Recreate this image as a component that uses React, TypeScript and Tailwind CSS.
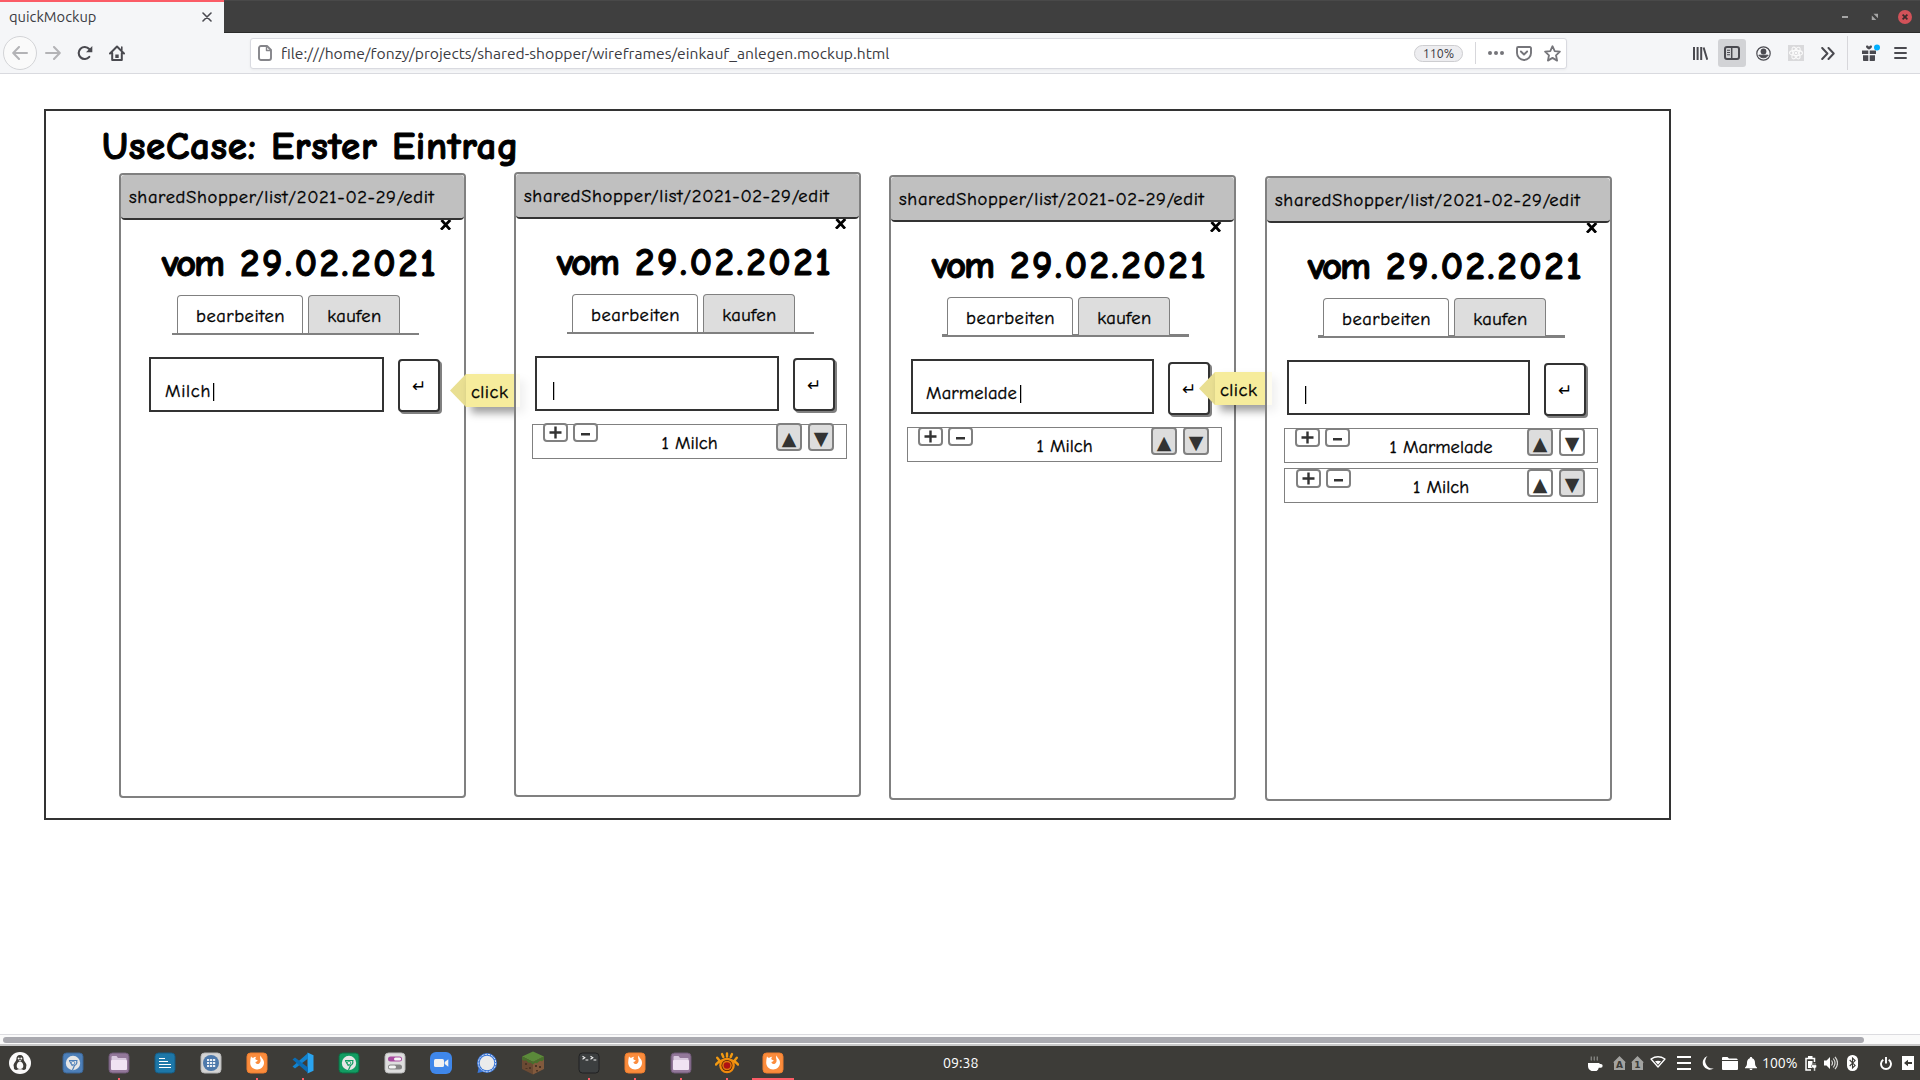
import type { ReactNode } from "react";

/* ---------- browser chrome ---------- */

function TabStrip() {
  return (
    <div className="flex h-[33px] bg-[#3f3f3f] border-b border-[#2b2b2b]">
      <div className="flex h-[33px] w-[224px] shrink-0 items-center justify-between border-t-2 border-[#fb5c66] bg-[#f5f6f8] pl-[9px] pr-[12px] text-[#3b3b42]">
        <span className="pb-[1px] text-[14.7px] leading-5">quickMockup</span>
        <svg className="mb-[1px]" width="10" height="10" viewBox="0 0 10 10" stroke="#4a4a50" strokeWidth="1.6" strokeLinecap="round">
          <path d="M1 1l8 8M9 1L1 9" />
        </svg>
      </div>
      <div className="flex flex-1 items-center justify-end border-t border-[#494949] pr-2">
        <span className="mr-[23px] h-[2px] w-[6px] bg-[#a5a5a5]" />
        <svg className="mr-[19px]" width="8" height="8" viewBox="0 0 8 8" fill="#a5a5a5">
          <path d="M2.500 0.800H7v4.500zM0.800 2.500L5.300 7H0.800z" />
        </svg>
        <svg width="14" height="14" viewBox="0 0 14 14">
          <circle cx="7" cy="7" r="7" fill="#d25259" />
          <path d="M4.6 4.6l4.8 4.8M9.4 4.6L4.6 9.4" stroke="#3a2a2b" strokeWidth="1.7" />
        </svg>
      </div>
    </div>
  );
}

function Toolbar() {
  return (
    <div className="flex h-[41px] items-center border-b border-[#d9dadf] bg-[#f5f6f8] text-[#4a4a50]">
      <div className="ml-[3px] flex size-[34px] items-center justify-center rounded-full border border-[#d3d4d7] bg-[#fafafa]">
        <svg width="16" height="14" viewBox="0 0 16 14" fill="none" stroke="#b3b3b6" strokeWidth="2" strokeLinecap="round" strokeLinejoin="round">
          <path d="M15 7H1.500M7 1L1.200 7 7 13" />
        </svg>
      </div>
      <svg className="ml-[8px]" width="16" height="14" viewBox="0 0 16 14" fill="none" stroke="#b3b3b6" strokeWidth="2" strokeLinecap="round" strokeLinejoin="round">
        <path d="M1 7h13.500M9 1l5.800 6L9 13" />
      </svg>
      <svg className="ml-[16px]" width="16" height="16" viewBox="0 0 16 16" fill="none" stroke="#4a4a50" strokeWidth="2.100">
        <path d="M12.300 11.800A6 6 0 1 1 12.200 4" strokeLinecap="round" />
        <path d="M15.300 1v6.300H9z" fill="#4a4a50" stroke="none" />
      </svg>
      <svg className="ml-[16px]" width="16" height="16" viewBox="0 0 16 16" fill="none" stroke="#4a4a50" strokeWidth="2" strokeLinejoin="round" strokeLinecap="round">
        <path d="M1 8.500L8 1.500l7 7M3.200 8v7h9.600V8" />
        <path d="M8 9.500V13" strokeWidth="3.400" strokeLinecap="butt" />
        <path d="M12.800 2v3" strokeWidth="1.600" />
      </svg>

      <div className="ml-[125px] flex h-[31px] w-[1317px] items-center rounded-[3px] border border-[#d9dae0] bg-white pl-[7px] shadow-[0_1px_3px_rgba(0,0,0,0.05)]">
        <svg width="14" height="16" viewBox="0 0 14 16" fill="none" stroke="#85858a" strokeWidth="1.900" strokeLinejoin="round">
          <path d="M3 1h6l4 4v8a2 2 0 0 1-2 2H3a2 2 0 0 1-2-2V3a2 2 0 0 1 2-2z" />
          <path d="M8.500 1v4.500H13" strokeWidth="1.400" />
        </svg>
        <span className="ml-[9px] w-[620px] whitespace-nowrap pb-[1px] text-[15.650px] leading-5 text-[#3b3b42]">
          file:///home/fonzy/projects/shared-shopper/wireframes/einkauf_anlegen.mockup.html
        </span>
        <div className="ml-auto flex h-[17px] w-[49px] items-center justify-center rounded-full border border-[#cdcdd0] bg-[#ededf0] text-[12.400px] leading-none text-[#3b3b42]">
          110%
        </div>
        <span className="ml-3 h-[22px] w-px bg-[#d7d7db]" />
        <svg className="ml-3" width="16" height="4" viewBox="0 0 16 4" fill="#75757a">
          <circle cx="2" cy="2" r="2" /><circle cx="8" cy="2" r="2" /><circle cx="14" cy="2" r="2" />
        </svg>
        <svg className="ml-[12px]" width="16" height="15" viewBox="0 0 16 15" fill="none" stroke="#75757a" strokeWidth="1.900" strokeLinecap="round" strokeLinejoin="round">
          <path d="M2.200 1h11.600A1.200 1.200 0 0 1 15 2.200V7A7 7 0 0 1 1 7V2.200A1.200 1.200 0 0 1 2.200 1z" />
          <path d="M4.900 5.500L8 8.500l3.100-3" />
        </svg>
        <svg className="ml-[12px] mr-[5px]" width="17" height="17" viewBox="0 0 17 17" fill="none" stroke="#75757a" strokeWidth="1.800" strokeLinejoin="round">
          <path d="M8.500 1.200l2.200 4.900 5.200.6-3.900 3.600 1.100 5.300-4.600-2.700-4.600 2.700L5 10.300 1.100 6.700l5.200-.6z" />
        </svg>
      </div>

      <svg className="ml-[126px]" width="15" height="15" viewBox="0 0 15 15" stroke="#4a4a50" strokeWidth="2">
        <path d="M1 1v13M4.600 1v13M8.200 1v13M10.600 1.500l3.700 12.300" />
      </svg>
      <div className="ml-[10px] flex h-[28px] w-[28px] items-center justify-center rounded-[3px] bg-[#d2d3d6]">
        <svg width="16" height="14" viewBox="0 0 16 14" fill="none" stroke="#4a4a50" strokeWidth="2">
          <rect x="1" y="1" width="14" height="12" rx="2" />
          <path d="M7.700 1v12" strokeWidth="1.500" />
          <path d="M3 4.200h3M3 6.500h3M3 8.800h3" strokeWidth="1.100" />
        </svg>
      </div>
      <svg className="ml-[10px]" width="15" height="15" viewBox="0 0 15 15" fill="none" stroke="#4a4a50">
        <circle cx="7.500" cy="7.500" r="6.700" strokeWidth="1.200" />
        <circle cx="7.500" cy="5.500" r="2.900" fill="#4a4a50" stroke="none" />
        <path d="M2.800 9.200h9.400a5.600 5.600 0 0 1-9.400 0z" fill="#4a4a50" strokeWidth="1" strokeLinejoin="round" />
      </svg>
      <svg className="ml-[17px]" width="16" height="16" viewBox="0 0 16 16">
        <rect width="16" height="16" fill="#d9d9db" />
        <g fill="none" stroke="#fafafa" strokeWidth="1.100">
          <ellipse cx="8" cy="8" rx="6.500" ry="2.600" />
          <ellipse cx="8" cy="8" rx="6.500" ry="2.600" transform="rotate(60 8 8)" />
          <ellipse cx="8" cy="8" rx="6.500" ry="2.600" transform="rotate(120 8 8)" />
        </g>
        <circle cx="8" cy="8" r="1.300" fill="#fafafa" />
      </svg>
      <svg className="ml-[17px]" width="14" height="13" viewBox="0 0 14 13" fill="none" stroke="#4a4a50" strokeWidth="2" strokeLinecap="round" strokeLinejoin="round">
        <path d="M1.200 1l5.200 5.500L1.200 12M7.500 1l5.200 5.500L7.500 12" />
      </svg>
      <span className="ml-[12px] h-[34px] w-px bg-[#d7d7db]" />
      <svg className="ml-[13px]" width="20" height="18" viewBox="0 0 20 18">
        <path d="M1 6.500h6.300V10H1zM8.700 6.500H15V10H8.700zM2 11.300h5.300V17H2.800A.8.800 0 0 1 2 16.200zM8.700 11.300H14v4.900a.8.800 0 0 1-.8.800H8.700z" fill="#4a4a50" />
        <path d="M5 2.600c0-1.300 2-1.600 3 .2 1-1.800 3-1.500 3-.2 0 1.500-1.500 2.400-3 2.900-1.500-.5-3-1.400-3-2.900z" fill="#4a4a50" />
        <circle cx="16" cy="3.600" r="3" fill="#00b0ff" />
      </svg>
      <svg className="ml-[13px]" width="13" height="12" viewBox="0 0 13 12" stroke="#4a4a50" strokeWidth="1.900" strokeLinecap="round">
        <path d="M1 1h11M1 6h11M1 11h11" />
      </svg>
    </div>
  );
}

/* ---------- wireframe ---------- */

const BODY = "text-[18.5px] [-webkit-text-stroke:0.35px_black]";

type Item = { label: string; up: boolean; down: boolean; shift: string };

function MoveButton({ glyph, grey }: { glyph: string; grey: boolean }) {
  return (
    <span
      className={`flex h-[28px] w-[26px] items-end justify-center rounded-[4px] border-2 border-[#808080] font-['DejaVu_Sans'] text-[19px] leading-[21px] text-[#333] ${grey ? "bg-[#ddd]" : "bg-white"}`}
    >
      {glyph}
    </span>
  );
}

function CountButton({ children }: { children: ReactNode }) {
  return (
    <span className="flex h-[19px] w-[25px] items-center justify-center rounded-[4px] border-2 border-[#808080] bg-white">
      {children}
    </span>
  );
}

function ItemRow({ item }: { item: Item }) {
  return (
    <div className="mb-[5px] flex h-[35px] border border-[#808080]">
      <div className={`flex gap-[5px] ${item.shift}`}>
        <CountButton>
          <svg width="13" height="13" viewBox="0 0 13 13" stroke="#333" strokeWidth="2.400"><path d="M0.500 6.500h12M6.500 0.500v12" /></svg>
        </CountButton>
        <CountButton>
          <svg className="mt-[3px]" width="9" height="3" viewBox="0 0 9 3"><path d="M0 0h9v2.500H0z" fill="#333" /></svg>
        </CountButton>
      </div>
      <div className={`flex-1 pl-[15px] pt-[6px] text-center leading-6 ${BODY}`}>{item.label}</div>
      <div className={`mr-[12px] flex gap-[6px] ${item.shift}`}>
        <MoveButton glyph="▲" grey={item.up} />
        <MoveButton glyph="▼" grey={item.down} />
      </div>
    </div>
  );
}

type PhoneProps = {
  place: string;
  rule: string;
  field: string;
  value: ReactNode;
  enter: string;
  rows: string;
  items: Item[];
  note?: string;
};

function Phone({ place, rule, field, value, enter, rows, items, note }: PhoneProps) {
  return (
    <section className={`relative h-[625px] w-[347px] shrink-0 rounded-[4px] border-2 border-[#808080] bg-white/85 ${place}`}>
      <header className={`h-[45px] rounded-[4px] border-b-2 border-[#333] bg-[#c0c0c0] pl-[8px] pt-[10px] leading-6 tracking-[0.640px] ${BODY}`}>
        sharedShopper/list/2021-02-29/edit
      </header>
      <div className="flex h-[17px] justify-end pr-[11px]">
        <svg width="14" height="10" viewBox="0 0 14 10" stroke="#000" strokeWidth="2.800"><path d="M2.500 0L11 9.600M11.300 0L2 9.600" /></svg>
      </div>
      <h2 className="h-[58px] whitespace-nowrap pl-[41px] pt-[3px] text-[39px] font-bold leading-[48px] [-webkit-text-stroke:1px_black]">
        <span className="tracking-[-2px]">vom</span>{" "}
        <span className="ml-[3px] tracking-[2.600px]">29.02.2021</span>
      </h2>
      <div className={`ml-[51px] flex h-[40px] w-[247px] gap-[5px] border-[#808080] pl-[5px] ${rule}`}>
        <span className={`relative z-10 h-[38px] w-[126px] rounded-t-[4px] border border-b-0 border-[#808080] bg-white pl-[1px] pt-[8px] text-center leading-6 tracking-[0.520px] ${BODY}`}>bearbeiten</span>
        <span className={`relative z-10 h-[38px] w-[92px] rounded-t-[4px] border border-b-0 border-[#808080] bg-[#ddd] pl-[1px] pt-[8px] text-center leading-6 tracking-[0.400px] ${BODY}`}>kaufen</span>
      </div>
      <div className="flex h-[78px]">
        <div className={`h-[55px] border-2 border-[#333] bg-white pl-[14px] pt-[20px] leading-6 ${BODY} ${field}`}>{value}</div>
        <div className={`ml-auto mr-[24px] flex h-[53px] w-[42px] items-center justify-center rounded-[4px] border-2 border-[#333] bg-white shadow-[2px_2px_0_#808080] ${enter}`}>
          <span className="font-['DejaVu_Sans'] text-[17px] leading-4">↵</span>
        </div>
      </div>
      <div className={rows}>
        {items.map((item) => <ItemRow key={item.label} item={item} />)}
      </div>
      {note && (
        <div className={`absolute flex h-[33px] ${note}`}>
          <svg className="shrink-0" width="16" height="33" viewBox="0 0 16 33"><path d="M0 16.500L16 0v33z" fill="#e9df92" /></svg>
          <div className={`flex-1 bg-[#f6ec9c] pl-[5px] pt-[6px] leading-6 tracking-[0.450px] shadow-[5px_6px_8px_rgba(0,0,0,0.38)] ${BODY}`}>click</div>
        </div>
      )}
    </section>
  );
}

const caret = <span className="inline-block h-[18px] w-px bg-black align-[-4px] shadow-[0.5px_0_0_rgba(0,0,0,0.5)]" />;

function Mockup() {
  return (
    <div className="ml-[44px] h-[711px] w-[1627px] border-2 border-[#333] font-['Comic_Neue','Comic_Sans_MS','Open_Sans',sans-serif] text-black">
      <h1 className="h-[61px] pl-[56px] pt-[12px] text-[39px] font-bold leading-[48px] tracking-[0.700px] [-webkit-text-stroke:1px_black]">UseCase: Erster Eintrag</h1>
      <div className="flex items-start">
        <Phone
          place="ml-[73px] mt-[1px]" rule="border-b-2"
          field="ml-[28px] mt-[22px] w-[235px]" enter="mt-[24px]" rows=""
          value={<span className="tracking-[0.700px]">Milch<span className="ml-[2px]">{caret}</span></span>}
          items={[]} note="left-[329px] top-[199px] w-[70px]"
        />
        <Phone
          place="ml-[48px]" rule="border-b-2"
          field="ml-[19px] mt-[22px] w-[244px]" enter="mt-[24px]" rows="ml-[16px] mt-[12px] w-[315px]"
          value={<span className="pl-[2px]">{caret}</span>}
          items={[{ label: "1 Milch", up: true, down: true, shift: "ml-[10px] mt-[-2px]" }]}
        />
        <Phone
          place="ml-[28px] mt-[3px]" rule="border-b-[3px]"
          field="ml-[20px] mt-[22px] w-[243px]" enter="mt-[25px]" rows="ml-[16px] mt-[12px] w-[315px]"
          value={<span className="ml-[-1px] tracking-[0.150px]">Marmelade<span className="ml-[3px]">{caret}</span></span>}
          items={[{ label: "1 Milch", up: true, down: true, shift: "ml-[10px] mt-[-1px]" }]}
          note="left-[308px] top-[195px] w-[73px]"
        />
        <Phone
          place="ml-[29px] mt-[4px]" rule="border-b-[3px]"
          field="ml-[20px] mt-[22px] w-[243px]" enter="mt-[25px]" rows="ml-[17px] mt-[12px] w-[314px]"
          value={<span className="pl-[2px]">{caret}</span>}
          items={[
            { label: "1 Marmelade", up: true, down: false, shift: "ml-[10px] mt-[-1px]" },
            { label: "1 Milch", up: false, down: true, shift: "ml-[11px] mt-0" },
          ]}
        />
      </div>
    </div>
  );
}

/* ---------- desktop panel ---------- */

function Tile({ fill, edge, children }: { fill: string; edge: string; children: ReactNode }) {
  return (
    <svg width="22" height="22" viewBox="0 0 22 22">
      <rect x="1" y="1" width="20" height="20" rx="3.500" fill={fill} stroke={edge} strokeWidth="1" />
      {children}
    </svg>
  );
}

const Chromium = ({ fill, edge }: { fill: string; edge: string }) => (
  <Tile fill={fill} edge={edge}>
    <circle cx="11" cy="11" r="7.200" fill="#e6e6e6" />
    <path d="M7 8.500h8.500M12.500 13.500L10.500 18M7.300 8.500l3.200 5.500M14.500 8.500c1 2 0 5-3 5.200" fill="none" stroke={fill} strokeWidth="1.200" />
    <circle cx="11" cy="11" r="1.800" fill="#e6e6e6" stroke={fill} strokeWidth="0.800" />
  </Tile>
);

const Files = () => (
  <Tile fill="#93789a" edge="#6e5876">
    <path d="M3.500 5a1 1 0 0 1 1-1h4l1.500 2h7.500a1 1 0 0 1 1 1v3h-15z" fill="#d9c8de" />
    <rect x="3" y="8" width="16" height="10" rx="1" fill="#f0e3f3" />
  </Tile>
);

const Firefox = () => (
  <Tile fill="#fb8c3c" edge="#ee7d2e">
    <path d="M5 4.200c.6 1.200 1.400 1.700 2.400 1.600.8-.7 1.700-1 2.900-1-1 .9-1.200 1.800-.7 2.600.6.500 1.300.7 2.100.8-.3 1.100-1.300 1.500-2.300 1.900.2 1.900 2.300 2.500 3.800 1.300 1.600-1.300 1.700-3.200 1-5-.3-1.100 0-2.100.6-2.800.2 1.300.9 2.100 1.700 3.100 1.100 1.300 1.600 2.800 1.500 4.500-.3 3.600-3.200 6.200-6.900 6.200-4 0-6.900-3-6.900-6.700 0-2.300.3-4.200.8-6.500z" fill="#fff" />
  </Tile>
);

const Launchers: { icon: ReactNode; mark: "none" | "dot" | "bar"; gap?: boolean }[] = [
  { icon: <Chromium fill="#4d7fb8" edge="#3b6594" />, mark: "none" },
  { icon: <Files />, mark: "dot" },
  {
    icon: <Tile fill="#1d77a8" edge="#165c84"><path d="M5 6.500h6M5 9.500h9M5 12.500h12M5 15.500h12" stroke="#fff" strokeWidth="1.200" /></Tile>,
    mark: "none",
  },
  {
    icon: (
      <Tile fill="#d4d4d4" edge="#b5b5b5">
        <circle cx="11" cy="11" r="8" fill="#4d79ab" />
        <path d="M7 8h2.200M10 8h2.200M13 8h2.200M7 11h2.200M10 11h2.200M13 11h2.200M7 14h2.200M10 14h2.200M13 14h2.200" stroke="#e8eef5" strokeWidth="2.200" />
      </Tile>
    ),
    mark: "none",
  },
  { icon: <Firefox />, mark: "dot" },
  {
    icon: (
      <svg width="22" height="22" viewBox="0 0 22 22">
        <path d="M15.500 0.500l6 2.800v15.400l-6 2.800z" fill="#2aa4f0" />
        <path d="M16 1v5.500L3 16.500.5 14.500z" fill="#1283cf" />
        <path d="M16 21v-5.500L3 5.500.5 7.500z" fill="#0a6cb5" />
      </svg>
    ),
    mark: "dot",
  },
  { icon: <Chromium fill="#129c62" edge="#0b6d43" />, mark: "none" },
  {
    icon: (
      <Tile fill="#dedede" edge="#b8b8b8">
        <rect x="4" y="4.500" width="14" height="5" rx="2.500" fill="#a84ba0" />
        <rect x="10" y="5.500" width="7.200" height="3" rx="1.500" fill="#f5f5f5" />
        <rect x="4" y="12.500" width="14" height="5" rx="2.500" fill="#858585" />
        <rect x="4.800" y="13.500" width="7.200" height="3" rx="1.500" fill="#f5f5f5" />
      </Tile>
    ),
    mark: "none",
  },
  {
    icon: (
      <svg width="22" height="22" viewBox="0 0 22 22">
        <rect width="22" height="22" rx="6" fill="#3f87ea" />
        <rect x="4" y="7" width="10" height="8" rx="1.500" fill="#f1f1f1" />
        <path d="M14.700 10l3.600-2.700v7.400L14.700 12z" fill="#f1f1f1" />
      </svg>
    ),
    mark: "none",
  },
  {
    icon: (
      <svg width="22" height="22" viewBox="0 0 22 22">
        <circle cx="11" cy="11" r="10" fill="#3a76d8" />
        <path d="M1.500 21l1.300-6 4.500 4.700z" fill="#3a76d8" />
        <circle cx="11" cy="11" r="8.700" fill="none" stroke="#dfe7f5" strokeWidth="1" strokeDasharray="2.200 1" />
        <circle cx="11" cy="11" r="7.300" fill="#ebebeb" />
      </svg>
    ),
    mark: "none",
  },
  {
    icon: (
      <svg className="mr-px" width="24" height="24" viewBox="0 0 24 24">
        <path d="M12 0.500l11 5-11 5.500L1 5.500z" fill="#5b8a3a" />
        <path d="M1 5.500L12 11v12.500L1 18z" fill="#6b4a33" />
        <path d="M23 5.500L12 11v12.500L23 18z" fill="#825a3d" />
        <path d="M1 5.500L12 11l11-5.500v3l-2 1.800-2-.5-3 2.500-2-.5-2 1.700-2.500-2-2 .3-2.500-2.500-2 .5L1 8.500z" fill="#47702c" />
        <path d="M4 12h2v2H4zM8 16h2v2H8zM14 14h2v2h-2zM18 15h2v2h-2zM15 19h2v1.500h-2zM4.500 17h2v1h-2z" fill="#4c3424" />
      </svg>
    ),
    mark: "none",
  },
  {
    icon: (
      <Tile fill="#3c3f40" edge="#202122">
        <path d="M4.500 4.300l2.300 1.500-2.300 1.500M12.500 4.300l2.300 1.500-2.300 1.500M7.500 8h2.800M15.500 8h2.800" fill="none" stroke="#f0f0f0" strokeWidth="1.100" />
      </Tile>
    ),
    mark: "dot",
    gap: true,
  },
  { icon: <Firefox />, mark: "dot" },
  { icon: <Files />, mark: "dot" },
  {
    icon: (
      <svg width="24" height="22" viewBox="0 0 24 22">
        <g stroke="#f39a12" strokeWidth="2.400" strokeLinecap="round">
          <path d="M4 8L2.200 5.800M8.300 5L7 2M15.700 5L17 2M20 8l1.800-2.200M12 4.500V1.500" />
        </g>
        <path d="M1 12.500C5.500 6.500 18.500 6.500 23 12.500" fill="none" stroke="#f39a12" strokeWidth="2.400" strokeLinecap="round" />
        <circle cx="12" cy="13.500" r="7.800" fill="#f08a0c" />
        <circle cx="12" cy="13.500" r="5.500" fill="#4b1c08" />
        <circle cx="12" cy="13.500" r="4.800" fill="#e0780f" />
        <circle cx="12" cy="13.500" r="3.300" fill="#b01212" />
      </svg>
    ),
    mark: "dot",
  },
  { icon: <Firefox />, mark: "bar" },
];

function Launcher({ icon, mark, gap }: { icon: ReactNode; mark: "none" | "dot" | "bar"; gap?: boolean }) {
  return (
    <div className={`flex h-[34px] w-[46px] shrink-0 flex-col items-center ${gap ? "ml-[10px]" : ""}`}>
      <div className="flex h-[32px] items-center pt-[2px]">{icon}</div>
      {mark === "dot" && <span className="h-[2px] w-[2px] bg-[#fb5c66]" />}
      {mark === "bar" && <span className="h-[2px] w-[42px] bg-[#fb5c66]" />}
    </div>
  );
}

function House({ mark }: { mark: string }) {
  return (
    <svg className="mr-[5px]" width="13" height="14" viewBox="0 0 13 14">
      <path d="M6.500 0L13 6.500h-1V14H1V6.500H0z" fill="#a3a3a0" />
      <text x="6.500" y="12" textAnchor="middle" fontSize="9" fontWeight="700" fill="#3b3a36" fontFamily="DejaVu Sans">{mark}</text>
    </svg>
  );
}

function Tray() {
  return (
    <div className="ml-auto flex items-center pr-[6px] text-white">
      <svg className="mr-[10px]" width="15" height="15" viewBox="0 0 15 15">
        <path d="M0 7h11.500v1h1.300a1.800 1.800 0 0 1 0 3.700h-2A5 5 0 0 1 8.500 15h-5C1 14 0 12 0 10z" fill="#fff" />
        <path d="M3 0.500c1 1.300-.5 2 .5 4M6 0.500c1 1.300-.5 2 .5 4M9 0.500c1 1.300-.5 2 .5 4" fill="none" stroke="#8f8f8c" strokeWidth="1.200" />
      </svg>
      <House mark="A" />
      <House mark="1" />
      <svg className="ml-px mr-[11px] mb-[2px]" width="16" height="12" viewBox="0 0 16 12">
        <path d="M1 3Q8-1.500 15 3L8 11z" fill="none" stroke="#fff" strokeWidth="1.300" strokeLinejoin="round" />
        <path d="M5 5.300Q8 4 11 5.300L8 8.800z" fill="#fff" />
      </svg>
      <svg className="mr-[11px]" width="14" height="14" viewBox="0 0 14 14" stroke="#fff" strokeWidth="2"><path d="M0 1h14M0 7h14M0 13h14" /></svg>
      <svg className="mr-[8px]" width="12" height="14" viewBox="0 0 12 14"><path d="M5.500 0A7.200 7.200 0 0 0 12 12.200 7 7 0 1 1 5.500 0z" fill="#fff" /></svg>
      <svg className="mr-[7px]" width="16" height="13" viewBox="0 0 16 13"><path d="M0 1a1 1 0 0 1 1-1h4.500L7 1.500h7.500A1.500 1.500 0 0 1 15.700 3H0zM0 4h16v8a1 1 0 0 1-1 1H1a1 1 0 0 1-1-1z" fill="#fff" /></svg>
      <svg className="mr-[5px]" width="12" height="13" viewBox="0 0 12 13"><path d="M6 0c.8 0 1.200.5 1.200 1.200C9.500 2 10 4 10 6c0 2.500.7 3.500 2 4.500v.7H0v-.7C1.300 9.500 2 8.500 2 6c0-2 .5-4 2.800-4.800C4.800.5 5.200 0 6 0zM4.500 11.700h3c0 .8-.7 1.300-1.500 1.300s-1.500-.5-1.500-1.300z" fill="#fff" /></svg>
      <span className="w-[35px] text-[14px] leading-5">100%</span>
      <svg className="ml-[8px] mr-[7px]" width="12" height="15" viewBox="0 0 12 15">
        <path d="M9.500 6V2.500H1v11.500h5" fill="none" stroke="#fff" strokeWidth="1.500" />
        <path d="M3 0h4.500v2H3zM3 5h4.500v7H3z" fill="#fff" />
        <path d="M6.500 9h1V7h1v2h1V7h1v2h1v2l-1.200 1.300V15h-1.500v-2.700L6.500 11z" fill="#fff" stroke="#3b3a36" strokeWidth="0.400" />
      </svg>
      <svg className="mr-[9px]" width="14" height="14" viewBox="0 0 14 14">
        <path d="M0 4.500h2.500L6 1v12L2.500 9.500H0z" fill="#fff" />
        <path d="M7.500 4.500q2 2.500 0 5M9.300 2.500q3.400 4.500 0 9M11 0.800q5 6.200 0 12.400" fill="none" stroke="#d8d8d6" strokeWidth="1.200" />
      </svg>
      <svg className="mr-[22px]" width="11" height="16" viewBox="0 0 11 16">
        <rect width="11" height="16" rx="5.200" fill="#fff" />
        <path d="M2.700 5l5.400 5.400L5.500 13V3l2.600 2.600L2.700 11" fill="none" stroke="#3b3a36" strokeWidth="1.100" />
      </svg>
      <svg className="mr-[10px]" width="12" height="13" viewBox="0 0 12 13" fill="none" stroke="#fff" strokeWidth="1.900">
        <path d="M3.300 2.800a5 5 0 1 0 5.400 0M6 0v6.500" />
      </svg>
      <svg width="12" height="14" viewBox="0 0 12 14">
        <path d="M0 0h12v14H0z" fill="#fff" />
        <path d="M2 7l4-3.200v2.300h4v1.800H6v2.300z" fill="#3b3a36" />
      </svg>
    </div>
  );
}

function Panel() {
  return (
    <div className="flex h-[34px] items-center bg-[#3d3c38]">
      <div className="flex w-[40px] shrink-0 justify-center">
        <svg width="22" height="22" viewBox="0 0 22 22">
          <circle cx="11" cy="11" r="11" fill="#fafafa" />
          <path d="M11 3c2.600 0 3.600 1.800 3.600 4 0 1.500 1 2.500 2.200 4.300.8 1.300.8 3 .2 3.700.6 1.500-.3 3-2.500 3-1 0-1.500-.7-3.500-.7s-2.500.7-3.500.7c-2.200 0-3.100-1.500-2.500-3-.6-.7-.6-2.400.2-3.700C6.400 9.500 7.400 8.500 7.400 7c0-2.200 1-4 3.600-4z" fill="#3d3c38" />
          <path d="M11 9.500c2.200 0 3.300 2.500 3.300 4.500s-1.200 3-3.300 3S7.700 16 7.700 14s1.100-4.500 3.300-4.500z" fill="#fafafa" />
          <circle cx="9.700" cy="6.500" r="1" fill="#fafafa" /><circle cx="12.300" cy="6.500" r="1" fill="#fafafa" />
          <path d="M9.500 8.300h3L11 9.600z" fill="#fafafa" />
        </svg>
      </div>
      <div className="ml-[10px] flex">
        {Launchers.map((l, i) => <Launcher key={i} {...l} />)}
      </div>
      <span className="ml-[147px] text-[14.200px] leading-5 text-white">09:38</span>
      <Tray />
    </div>
  );
}

export default function App() {
  return (
    <div className="flex h-[1080px] w-[1920px] flex-col overflow-hidden bg-white font-['Ubuntu','Open_Sans',sans-serif]">
      <TabStrip />
      <Toolbar />
      <main className="flex-1 pt-[35px]">
        <Mockup />
      </main>
      <div className="h-[12px] border-t border-[#dcdce0] bg-[#fafafa] pt-[2px]">
        <div className="ml-[3px] h-[6px] w-[1861px] rounded-full bg-[#a9a9af]" />
        <div className="mt-px h-[2px] bg-[#c9c9c9]" />
      </div>
      <Panel />
    </div>
  );
}
